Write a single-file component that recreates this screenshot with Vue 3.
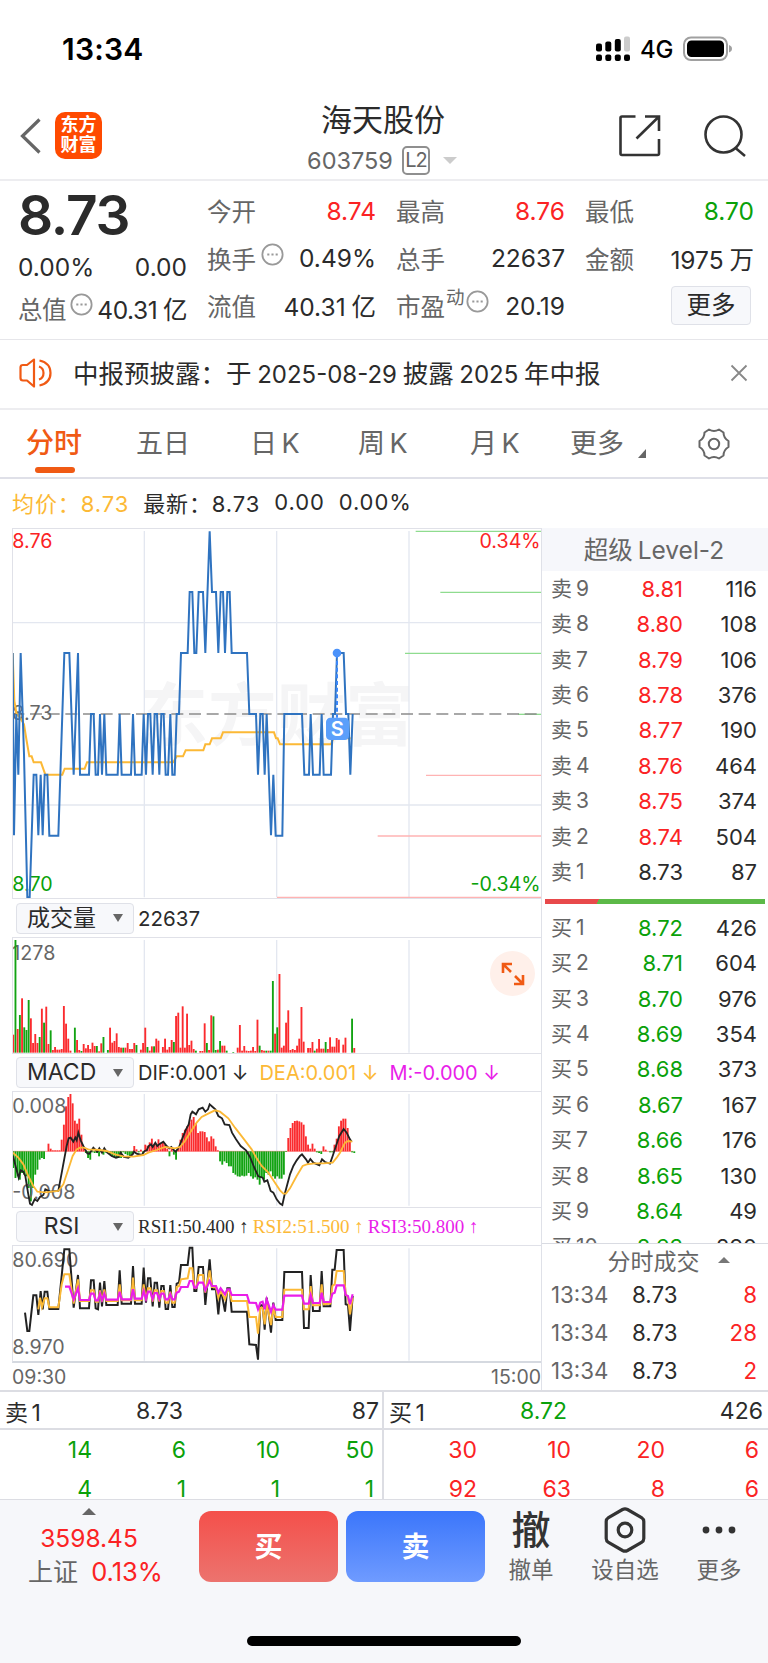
<script setup>
const facts = [
  [
    { label: '今开', value: '8.74', tone: 'up' },
    { label: '换手', value: '0.49%', more: true },
    { label: '流值', value: '40.31 亿' }
  ],
  [
    { label: '最高', value: '8.76', tone: 'up' },
    { label: '总手', value: '22637' },
    { label: '市盈', sup: '动', value: '20.19', more: true }
  ],
  [
    { label: '最低', value: '8.70', tone: 'down' },
    { label: '金额', value: '1975 万' }
  ]
]

const tabs = ['分时', '五日', '日 K', '周 K', '月 K', '更多']

const asks = [
  ['卖 9', '8.81', 116],
  ['卖 8', '8.80', 108],
  ['卖 7', '8.79', 106],
  ['卖 6', '8.78', 376],
  ['卖 5', '8.77', 190],
  ['卖 4', '8.76', 464],
  ['卖 3', '8.75', 374],
  ['卖 2', '8.74', 504],
  ['卖 1', '8.73', 87]
]

const bids = [
  ['买 1', '8.72', 426],
  ['买 2', '8.71', 604],
  ['买 3', '8.70', 976],
  ['买 4', '8.69', 354],
  ['买 5', '8.68', 373],
  ['买 6', '8.67', 167],
  ['买 7', '8.66', 176],
  ['买 8', '8.65', 130],
  ['买 9', '8.64', 49],
  ['买 10', '8.63', 290]
]

const trades = [
  ['13:34', '8.73', 8],
  ['13:34', '8.73', 28],
  ['13:34', '8.73', 2]
]

const queues = [
  { side: '卖 1', price: '8.73', total: 87, tone: 'down', priceTone: '', cells: [14, 6, 10, 50, 4, 1, 1, 1] },
  { side: '买 1', price: '8.72', total: 426, tone: 'up', priceTone: 'down', cells: [30, 10, 20, 6, 92, 63, 8, 6] }
]

// charts are drawn on a grid three times finer than the layout
const priceLine = '38,396 42,943 49,579 55,761 62,396 72,700 82,1129 89,1129 101,761 109,761 115,943 122,761 128,943 134,761 142,761 148,944 175,944 193,396 208,396 221,761 234,396 240,761 267,761 273,579 281,579 287,761 294,761 300,579 306,761 313,579 319,761 353,761 359,579 365,761 393,761 399,579 405,761 425,761 431,579 438,761 444,579 451,579 458,761 464,579 471,579 478,761 484,579 491,579 497,761 504,761 511,579 517,761 524,761 530,579 537,579 543,396 563,396 569,213 577,213 583,396 589,396 596,213 609,213 616,396 629,31 636,213 648,213 655,396 662,213 669,213 675,396 682,213 689,213 695,396 741,396 748,579 768,579 774,761 781,579 788,579 794,761 800,579 813,943 820,761 827,944 847,944 853,579 906,579 913,761 927,761 932,579 939,761 959,761 965,579 971,761 993,761 999,579 1005,579 1011,396 1031,396 1038,579 1045,579 1051,761 1058,579'
const averageLine = '38,396 43,540 50,580 60,590 72,610 80,660 88,706 95,706 101,724 123,724 136,761 187,761 194,743 254,743 261,724 520,724 530,706 549,706 557,688 610,688 616,670 629,670 636,652 662,652 669,634 822,634 828,652 833,652 840,670 993,670 1000,652 1052,652'

const depthLines = [
  [1247, 31, '#8fdc8f'],
  [1321, 214, '#8fdc8f'],
  [1215, 397, '#8fdc8f'],
  [1554, 580, '#8fdc8f'],
  [1278, 763, '#ffb3b3'],
  [1133, 945, '#ffb3b3'],
  [831, 1129, '#ffb3b3']
]

// negative means a falling minute
const volumes = [
  54, -338, 71, -113, 163, -76, -68, -158, 103, 29, 56, 29, -47, 132, -90, 138, 26, -67, 8, 17,
  9, 9, 11, 140, 87, 42, 6, 0, -75, 38, 8, -5, 26, 13, 23, 11, 30, 20, -20, 4,
  28, -47, 0, -8, 75, 30, 35, 58, 17, 15, -15, 15, 29, 11, 11, 29, -23, 0, 9, 29,
  75, -17, 6, 19, -19, 42, 36, 0, 17, 42, 9, 17, 38, -32, 110, 120, 15, 139, 15, 117,
  23, 36, 11, -6, 0, 5, 5, 88, -29, 8, 112, -109, -8, 9, -35, 21, 21, -6, 0, 0,
  -2, 0, 15, 83, 6, 20, 6, 5, 6, 17, 5, 99, -21, 8, 6, -6, 6, -6, -215, 57,
  -76, 236, 15, 21, 90, 127, 8, 11, 8, 21, 42, 137, 33, 0, 14, 14, 32, -6, 12, 41,
  12, 12, -32, 11, 46, 18, 18, 44, 39, 0, 24, 45, 0, 0, -102, 14
]

const macdBars = [
  -50, -80, -75, -85, -65, -70, -75, -110, -150, -110, -70, -55, -25, -20, -23, 0, 23, 8, 3, 3,
  3, 3, 35, 80, 135, 163, 172, 144, 92, 83, 98, 50, 13, -5, -20, -25, -3, -5, -5, -15,
  -3, -10, -4, -3, -10, -15, -18, -20, -20, -20, -3, -8, -12, -14, -10, 16, 6, -3, 5, -6,
  20, 17, 27, 38, 20, 20, 36, 25, 28, 20, 8, -15, 8, -10, -25, 8, 35, 55, 65, 75,
  85, 95, 103, 85, 55, 60, 60, 58, 42, 30, 45, 38, 15, 3, -30, -40, -30, -35, -45, -45,
  -65, -70, -75, -76, -73, -75, -73, -65, -75, -82, -78, -85, -100, -80, -85, -65, -70, -60, -75, -82,
  -75, -82, -82, -70, -2, 40, 70, 85, 91, 92, 90, 87, 80, 45, 20, 8, 23, 8, -3, -5,
  -8, 15, 5, 0, -3, -3, 20, 38, 75, 92, 98, 98, 70, 35, -3, -5
]

const difLine = '39,765 48,800 56,830 62,808 70,812 76,825 84,875 90,908 96,912 104,895 112,900 120,888 130,882 136,865 150,872 175,870 188,800 200,735 206,712 212,710 220,722 226,710 230,718 235,695 242,718 250,735 262,757 268,758 280,740 292,752 298,742 306,755 313,742 322,755 335,765 348,770 356,768 362,755 372,768 385,770 398,760 402,752 410,758 425,762 434,750 440,748 446,735 453,730 458,738 466,725 472,735 480,728 490,722 500,735 508,742 514,738 522,748 527,752 537,738 548,710 558,685 566,670 572,640 577,632 588,640 596,625 608,620 616,632 624,625 629,610 638,618 646,625 655,645 666,652 674,670 688,672 696,695 708,715 722,735 738,748 750,768 762,798 775,826 788,830 793,842 802,838 812,870 820,875 830,895 840,908 847,912 854,880 862,850 870,820 880,795 890,778 900,765 906,760 918,775 924,785 931,774 940,785 958,793 966,775 975,783 990,788 998,765 1008,735 1018,705 1031,684 1040,695 1050,715 1055,722'
const deaLine = '39,755 55,770 70,790 85,825 100,855 112,872 135,874 175,870 190,850 205,805 218,765 230,745 240,740 252,740 265,745 300,747 320,750 345,760 370,766 400,767 430,762 445,755 470,747 495,738 525,742 540,738 555,720 570,695 590,665 605,648 620,640 645,628 660,632 685,652 705,680 730,712 755,745 770,772 785,795 805,815 820,838 840,868 850,878 858,878 870,862 890,825 908,795 920,790 945,787 970,787 998,785 1010,770 1020,755 1035,725 1045,720 1057,722'

const rsi1 = '75,485 82,540 88,540 100,433 109,433 115,492 122,420 128,475 134,422 142,422 148,474 175,474 193,295 208,295 221,470 234,372 240,472 267,472 273,388 281,388 287,472 294,475 300,395 306,466 313,390 319,462 353,462 359,358 365,458 393,458 399,345 405,458 425,458 431,350 438,455 444,382 451,382 458,466 464,395 471,395 478,470 484,405 491,405 497,474 504,474 511,402 517,468 524,468 530,398 537,395 543,342 563,342 569,290 577,290 583,420 589,420 596,348 609,348 616,462 629,325 636,415 648,415 655,490 662,412 675,482 682,412 689,412 695,482 741,482 748,580 768,582 774,626 781,463 788,463 794,536 800,440 813,545 820,455 827,507 847,507 853,363 906,363 912,531 926,531 932,372 939,480 959,480 965,360 971,466 991,466 997,356 1004,356 1010,297 1031,297 1037,460 1044,462 1050,540 1058,435'
const rsi2 = '115,475 120,440 126,468 134,442 142,442 148,469 175,469 185,400 193,370 208,370 221,458 234,385 240,450 267,450 273,418 281,418 287,452 294,452 300,418 306,452 313,415 319,450 353,450 359,400 365,448 393,448 399,380 405,448 425,448 431,400 438,448 444,412 451,412 458,452 464,418 471,418 478,452 484,420 491,420 497,455 504,455 511,422 517,455 524,455 530,408 537,405 543,385 563,382 569,352 577,352 583,410 589,410 596,372 609,372 616,425 629,358 636,408 648,408 655,440 662,418 675,445 682,420 689,420 695,450 741,450 748,498 768,498 774,548 781,470 788,470 794,520 800,458 813,522 820,470 827,498 847,498 853,416 906,416 912,475 926,475 932,405 939,463 959,463 965,400 971,460 991,458 997,405 1004,400 1010,360 1031,360 1037,430 1044,440 1050,490 1058,440'
const rsi3 = '195,407 208,407 221,445 234,412 240,447 267,447 273,428 281,428 287,448 294,448 300,428 306,447 313,428 319,446 353,446 359,422 365,445 393,445 399,415 405,443 425,443 431,420 438,444 444,422 451,422 458,444 464,426 471,426 478,444 484,428 491,428 497,445 504,445 511,430 517,445 524,445 530,425 537,422 543,408 563,408 569,390 577,390 583,410 589,410 596,395 609,395 616,418 629,390 636,405 648,405 655,425 662,412 675,430 682,415 689,415 695,432 741,432 748,455 768,456 774,475 781,455 788,452 794,475 800,445 813,482 820,462 827,476 847,476 853,434 906,434 912,458 926,458 932,432 939,456 959,456 965,425 971,453 991,453 997,428 1004,425 1010,403 1031,403 1037,432 1044,435 1050,460 1058,430'

// volume columns all stand on the base line, macd columns hang from it when negative
const toBars = (list, base, standing) =>
  list
    .map((v, i) => ({
      x: 37 + i * 6.6,
      y: v > 0 || standing ? base - Math.abs(v) : base,
      h: Math.abs(v),
      fill: v > 0 ? '#fb2b2e' : '#12a312'
    }))
    .filter((bar) => bar.h)

const volumeBars = toBars(volumes, 455, true)
const histogram = toBars(macdBars, 751, false)
</script>

<template>
  <div class="screen">
    <div class="status">
      <span class="clock">13:34</span>
      <div class="status-right">
        <svg width="35" height="26" viewBox="0 0 35 26">
          <g fill="#000">
            <rect x="0" y="7.5" width="6" height="8" rx="2" />
            <rect x="9.3" y="5.5" width="6" height="10" rx="2" />
            <rect x="18.8" y="3" width="6" height="12.5" rx="2" />
            <rect x="0" y="18.5" width="6" height="6.5" rx="2" />
            <rect x="9.3" y="18.5" width="6" height="6.5" rx="2" />
            <rect x="18.8" y="18.5" width="6" height="6.5" rx="2" />
            <rect x="28" y="18.5" width="6" height="6.5" rx="2" />
          </g>
          <rect x="28" y="0.5" width="6" height="15" rx="2" fill="#ccc" />
        </svg>
        <span class="network">4G</span>
        <svg width="50" height="26" viewBox="0 0 50 26">
          <rect x="1" y="1.5" width="43" height="22.5" rx="7" fill="none" stroke="#a0a0a0" stroke-width="2" />
          <rect x="4" y="4.5" width="37" height="16.5" rx="4.5" />
          <path d="M46 9v7.5q3-1 3-3.7T46 9z" fill="#a0a0a0" />
        </svg>
      </div>
    </div>

    <header class="header">
      <div class="header-left">
        <svg width="22" height="36" viewBox="0 0 22 36" fill="none" stroke="#666" stroke-width="3.2">
          <path d="M19.5 1.5 2.5 18l17 16.5" />
        </svg>
        <div class="logo">东方<br />财富</div>
      </div>
      <div class="header-title">
        <h1>海天股份</h1>
        <div class="code">
          <span>603759</span>
          <span class="level">L2</span>
          <i class="caret"></i>
        </div>
      </div>
      <div class="header-right">
        <svg width="44" height="44" viewBox="0 0 44 44" fill="none" stroke="#333" stroke-width="2.6">
          <path d="M17.5 2.5H4Q2.5 2.5 2.5 4V39.5Q2.5 41 4 41H39.5Q41 41 41 39.5V25" />
          <path d="M27 2.5H41V17M41 2.5 18.5 24.5" />
        </svg>
        <svg width="44" height="44" viewBox="0 0 44 44" fill="none" stroke="#333" stroke-width="2.6">
          <circle cx="20.5" cy="20.5" r="18" />
          <path d="M32.5 34 42 42" />
        </svg>
      </div>
    </header>

    <section class="quote">
      <div class="quote-col first">
        <div class="price">8.73</div>
        <div class="fact change"><span>0.00%</span><span>0.00</span></div>
        <div class="fact cap">
          <span class="label">总值<svg class="dots" viewBox="0 0 22 22"><circle cx="11" cy="11" r="9.7" /><path d="M6 11h2M10 11h2M14 11h2" /></svg></span>
          <span>40.31 亿</span>
        </div>
      </div>
      <div v-for="(col, c) in facts" :key="c" class="quote-col">
        <div v-for="fact in col" :key="fact.label" class="fact">
          <span class="label">{{ fact.label }}<sup v-if="fact.sup">{{ fact.sup }}</sup><svg v-if="fact.more" class="dots" viewBox="0 0 22 22"><circle cx="11" cy="11" r="9.7" /><path d="M6 11h2M10 11h2M14 11h2" /></svg></span>
          <span :class="fact.tone">{{ fact.value }}</span>
        </div>
        <div v-if="c === 2" class="fact end"><button class="more">更多</button></div>
      </div>
    </section>

    <section class="notice">
      <svg width="34" height="30" viewBox="0 0 34 30" fill="none" stroke="#f05a14" stroke-width="2.2">
        <path d="M15 1.5 8 7H4Q1.5 7 1.5 9.500V20Q1.5 22.5 4 22.5H8L15 28.5z" stroke-linejoin="round" />
        <path d="M20 8.5Q24.5 10 24.5 15T20 21.5M20.5 2.5Q31.5 5 31.5 15T20.5 27.5" />
      </svg>
      <p>中报预披露：于 <b>2025-08-29</b> 披露 <b>2025</b> 年中报</p>
      <svg width="18" height="18" viewBox="0 0 18 18" stroke="#888" stroke-width="1.8">
        <path d="M1.5 1.5 16.5 16.5M16.5 1.5 1.5 16.5" />
      </svg>
    </section>

    <nav class="tabs">
      <span v-for="(tab, i) in tabs" :key="tab" :class="['tab', 'tab-' + i, { active: i === 0 }]">{{ tab }}</span>
      <i class="corner"></i>
      <svg class="gear" width="34" height="34" viewBox="0 0 34 34" fill="none" stroke="#666" stroke-width="2">
        <path d="M12 2.5Q17 5.5 22 2.5L26.5 5.5Q26.5 11 31.5 14V20Q26.5 23 26.5 28.5L22 31.5Q17 28.5 12 31.5L7.5 28.5Q7.500 23 2.5 20V14Q7.500 11 7.5 5.5z" stroke-linejoin="round" />
        <circle cx="17" cy="17" r="5.2" />
      </svg>
    </nav>

    <div class="summary">
      <span class="avg">均价：8.73</span>
      <span>最新：8.73</span>
      <span>0.00</span>
      <span>0.00%</span>
    </div>

    <main class="board">
      <div class="charts">
        <svg class="pane" width="528" height="369" viewBox="39 24 1584 1107">
          <text class="watermark" x="418" y="658">东方财富</text>
          <g stroke="#e3e7f0" stroke-width="4">
            <path d="M433 30V1129M830 30V1129M1227 30V1129M39 305H1623M39 852H1623" />
          </g>
          <path v-for="line in depthLines" :key="line[1]" :d="`M${line[0]} ${line[1]}H1623`" :stroke="line[2]" stroke-width="4" />
          <path d="M37 579H1612" stroke="#8c8c8c" stroke-width="5" stroke-dasharray="36 17" />
          <g class="axis">
            <text class="up" x="37" y="81">8.76</text>
            <text x="37" y="597">8.73</text>
            <text class="down" x="37" y="1111">8.70</text>
            <text class="up" x="1622" y="81" text-anchor="end">0.34%</text>
            <text class="down" x="1622" y="1111" text-anchor="end">-0.34%</text>
          </g>
          <polyline :points="averageLine" fill="none" stroke="#fcb936" stroke-width="6" />
          <polyline :points="priceLine" fill="none" stroke="#2f73c0" stroke-width="6" />
          <path d="M1011 400V590" stroke="#3b86f8" stroke-width="6" stroke-dasharray="12 8" />
          <circle cx="1011" cy="396" r="13" fill="#4b92fa" />
          <rect x="978" y="590" width="69" height="67" rx="13" fill="#5b9ffb" />
          <text class="mark" x="1012" y="645" text-anchor="middle">S</text>
        </svg>

        <div class="indicator tall">
          <button class="select"><span>成交量</span><i></i></button>
          <span>22637</span>
        </div>
        <div class="volume">
          <svg class="pane" width="528" height="115" viewBox="39 111 1584 345">
            <path d="M433 117V455M830 117V455M1227 117V455" stroke="#e3e7f0" stroke-width="4" />
            <g class="axis"><text x="37" y="176">1278</text></g>
            <rect v-for="bar in volumeBars" :key="bar.x" :x="bar.x" :y="bar.y" width="5.6" :height="bar.h" :fill="bar.fill" />
          </svg>
          <button class="expand">
            <svg width="24" height="24" viewBox="0 0 24 24" fill="none" stroke="#f05a14" stroke-width="2.6">
              <path d="M2 11V2H11M2 2 10 10M22 13V22H13M22 22 14 14" />
            </svg>
          </button>
        </div>

        <div class="indicator">
          <button class="select"><span>MACD</span><i></i></button>
          <span>DIF:0.001 ↓</span>
          <span class="gold">DEA:0.001 ↓</span>
          <span class="pink">M:-0.000 ↓</span>
        </div>
        <svg class="pane" width="528" height="115" viewBox="39 573 1584 345">
          <path d="M433 579V914M830 579V914M1227 579V914" stroke="#e3e7f0" stroke-width="4" />
          <path d="M37 751H1060" stroke="#ff9c9c" stroke-width="3" />
          <rect v-for="bar in histogram" :key="bar.x" :x="bar.x" :y="bar.y" width="5.6" :height="bar.h" :fill="bar.fill" />
          <g class="axis">
            <text x="37" y="636">0.008</text>
            <text x="37" y="895">-0.008</text>
          </g>
          <polyline :points="difLine" fill="none" stroke="#222" stroke-width="5.5" />
          <polyline :points="deaLine" fill="none" stroke="#fcb936" stroke-width="5.5" />
        </svg>

        <div class="indicator serif">
          <button class="select"><span>RSI</span><i></i></button>
          <span>RSI1:50.400 ↑</span>
          <span class="gold">RSI2:51.500 ↑</span>
          <span class="pink">RSI3:50.800 ↑</span>
        </div>
        <svg class="pane last" width="528" height="115" viewBox="39 285 1584 345">
          <path d="M433 292V629M830 292V629M1227 292V629" stroke="#e3e7f0" stroke-width="4" />
          <g class="axis">
            <text x="37" y="349">80.690</text>
            <text x="37" y="609">8.970</text>
          </g>
          <polyline :points="rsi1" fill="none" stroke="#222" stroke-width="6" />
          <polyline :points="rsi2" fill="none" stroke="#fcb936" stroke-width="6" />
          <polyline :points="rsi3" fill="none" stroke="#e91ee9" stroke-width="6.5" />
        </svg>
        <div class="times"><span>09:30</span><span>15:00</span></div>
      </div>

      <aside class="book">
        <div class="book-title">超级 Level-2</div>
        <div class="orders">
          <div v-for="row in asks" :key="row[0]" class="order">
            <span class="label">{{ row[0] }}</span>
            <span :class="['p', { up: row[1] !== '8.73' }]">{{ row[1] }}</span>
            <span class="q">{{ row[2] }}</span>
          </div>
          <div class="ratio"></div>
          <div v-for="row in bids" :key="row[0]" class="order">
            <span class="label">{{ row[0] }}</span>
            <span class="p down">{{ row[1] }}</span>
            <span class="q">{{ row[2] }}</span>
          </div>
        </div>
        <div class="trades-title">分时成交<i></i></div>
        <div v-for="(row, i) in trades" :key="i" class="trade">
          <span class="label">{{ row[0] }}</span>
          <span>{{ row[1] }}</span>
          <span class="q up">{{ row[2] }}</span>
        </div>
      </aside>
    </main>

    <section class="queues">
      <div v-for="queue in queues" :key="queue.side" class="queue">
        <div class="queue-head">
          <span>{{ queue.side }}</span>
          <span :class="queue.priceTone">{{ queue.price }}</span>
          <span class="total">{{ queue.total }}</span>
        </div>
        <div :class="['cells', queue.tone]">
          <span v-for="(cell, i) in queue.cells" :key="i">{{ cell }}</span>
        </div>
      </div>
    </section>

    <footer class="footer">
      <div class="actions">
        <div class="index">
          <i></i>
          <span class="up">3598.45</span>
          <div><span>上证</span><span class="up percent">0.13%</span></div>
        </div>
        <button class="trade-btn buy">买</button>
        <button class="trade-btn sell">卖</button>
        <div class="action cancel"><strong>撤</strong><span>撤单</span></div>
        <div class="action fav">
          <svg width="42" height="46" viewBox="0 0 42 46" fill="none" stroke="#333" stroke-width="3.2">
            <path d="M18.5 2.5Q21 1.2 23.5 2.5L37.5 10.5Q39.8 12 39.8 14.5V31.5Q39.8 34 37.5 35.5L23.5 43.5Q21 44.8 18.5 43.5L4.5 35.5Q2.2 34 2.2 31.5V14.5Q2.2 12 4.5 10.5z" />
            <circle cx="21" cy="23" r="6.8" />
          </svg>
          <span>设自选</span>
        </div>
        <div class="action rest">
          <svg width="42" height="46" viewBox="0 0 42 46" fill="#333">
            <circle cx="8" cy="23" r="3.4" /><circle cx="21" cy="23" r="3.4" /><circle cx="34" cy="23" r="3.4" />
          </svg>
          <span>更多</span>
        </div>
      </div>
      <div class="home"></div>
    </footer>
  </div>
</template>

<style>
body {
  background: #fff;
}
</style>

<style scoped>
.screen {
  width: 768px;
  height: 1663px;
  overflow: hidden;
  display: flex;
  flex-direction: column;
  background: #fff;
  color: #2b2b2b;
  font-family: Inter, 'Noto Sans CJK SC', sans-serif;
  font-size: 22px;
  white-space: nowrap;
}

.screen * {
  box-sizing: border-box;
}

svg {
  display: block;
  flex: none;
}

button {
  border: 0;
  padding: 0;
  font: inherit;
  color: inherit;
}

.up {
  color: #fb2324;
  fill: #fb2324;
}

.down {
  color: #0aa10a;
  fill: #0aa10a;
}

.label {
  color: #666;
}

.gold {
  color: #fcb936;
}

.pink {
  color: #e91ee9;
}

/* status bar */
.status {
  height: 98px;
  padding: 0 35px 0 62px;
  display: flex;
  align-items: center;
  justify-content: space-between;
}

.clock {
  color: #000;
  font-size: 30px;
  font-weight: 600;
  letter-spacing: 0.2px;
}

.status-right {
  display: flex;
  align-items: center;
  color: #000;
}

.network {
  width: 34px;
  margin: 1px 9px 0;
  font-size: 24px;
  font-weight: 500;
  letter-spacing: -0.3px;
}

/* header */
.header {
  height: 83px;
  padding: 0 20px;
  border-bottom: 2px solid #ededf0;
  display: grid;
  grid-template-columns: 1fr 180px 1fr;
}

.header-left {
  display: flex;
  gap: 13px;
  padding-top: 14px;
  align-items: flex-start;
}

.header-left svg {
  margin-top: 6px;
}

.logo {
  width: 47px;
  height: 47px;
  padding-top: 3px;
  border-radius: 10px;
  background: #ff4a00;
  color: #fff;
  font-size: 18px;
  font-weight: 700;
  line-height: 20px;
  text-align: center;
}

.header-title {
  display: flex;
  flex-direction: column;
  align-items: center;
}

h1 {
  margin: 0 0 0 -2px;
  height: 45px;
  font-size: 31px;
  line-height: 44px;
  font-weight: 400;
}

.code {
  display: flex;
  align-items: center;
  height: 34px;
  margin-left: -4px;
  color: #666;
  font-size: 23.5px;
}

.level {
  width: 28px;
  height: 29px;
  margin-left: 9px;
  border: 2px solid #8f8f8f;
  border-radius: 5px;
  font-size: 20px;
  line-height: 25px;
  letter-spacing: -1px;
  text-align: center;
}

.caret {
  margin-left: 13px;
  border: 7px solid transparent;
  border-top-color: #ccc;
  border-bottom: 0;
}

.header-right {
  display: flex;
  justify-content: flex-end;
  gap: 41px;
  padding: 16px 1px 0 0;
}

/* quote */
.quote {
  height: 159px;
  padding: 6px 14px 0 18px;
  border-bottom: 1px solid #e6e6ea;
  display: grid;
  grid-template-columns: repeat(4, 169px);
  gap: 20px;
}

.fact {
  height: 47.500px;
  display: flex;
  align-items: center;
  justify-content: space-between;
  font-size: 24.5px;
  word-spacing: -1px;
}

.fact .label {
  display: flex;
  font-size: 24.5px;
}

.fact sup {
  align-self: flex-start;
  margin: -3px 0 0 1px;
  font-size: 18.5px;
  line-height: 24px;
}

.dots {
  width: 23px;
  height: 23px;
  margin: 2px 0 0 5px;
  fill: none;
  stroke: #999;
  stroke-width: 1.7;
}

sup + .dots {
  margin-left: 1px;
}

.price {
  height: 56px;
  font-size: 55px;
  font-weight: 600;
  line-height: 56px;
  letter-spacing: -1.2px;
}

.change {
  height: 44px;
  padding-top: 3px;
}

.cap {
  height: 42px;
  letter-spacing: -0.4px;
}

.cap .dots {
  margin-left: 4px;
}

.end {
  justify-content: flex-end;
}

.more {
  width: 80px;
  height: 39px;
  margin-right: 3px;
  border: 1px solid #dfe1e8;
  border-radius: 4px;
  background: #f7f8fb;
  font-size: 24.5px;
  line-height: 35px;
}

/* notice */
.notice {
  height: 70px;
  padding: 0 20px 2px 19px;
  border-bottom: 2px solid #ededf0;
  display: flex;
  align-items: center;
}

.notice p {
  flex: 1;
  margin: -3px 0 0 20px;
  font-size: 25.5px;
  word-spacing: -1.5px;
}

.notice b {
  font-weight: 400;
  font-size: 24px;
}

/* tabs */
.tabs {
  height: 69px;
  padding: 0 0 0 26px;
  border-bottom: 2px solid #dfe0e8;
  display: flex;
  align-items: center;
  color: #666;
  font-size: 27px;
  word-spacing: -3px;
}

.tab {
  position: relative;
  line-height: 65px;
}

.tab-0 { width: 110px; }
.tab-1 { width: 114px; }
.tab-2 { width: 108px; }
.tab-3 { width: 112px; }
.tab-4 { width: 100px; }
.tab-5 { width: 68px; }

.active {
  color: #f05a14;
  font-size: 28px;
  font-weight: 500;
}

.active::after {
  content: '';
  position: absolute;
  left: 9px;
  bottom: 3px;
  width: 40px;
  height: 6px;
  border-radius: 3px;
  background: #f05a14;
}

.corner {
  margin-top: 20px;
  border-left: 8px solid transparent;
  border-bottom: 9px solid #666;
}

.gear {
  margin-left: 51px;
}

.summary {
  height: 46px;
  margin-bottom: 3px;
  padding-left: 12px;
  display: flex;
  align-items: center;
  gap: 14px;
  letter-spacing: 0.9px;
}

.avg {
  color: #fcb936;
}

/* board */
.board {
  height: 862px;
  display: grid;
  grid-template-columns: 542px 1fr;
}

.charts {
  padding-left: 12px;
  border-right: 1px solid #dfe1e8;
}

.charts .pane {
  box-sizing: content-box;
  border: solid #e0e1e8;
  border-width: 1px 0 1px 1px;
}

.charts .last {
  border-bottom: 2px solid #d5d9e0;
}

.axis {
  font-size: 59px;
  fill: #666;
}

.watermark {
  font-size: 206px;
  font-weight: 700;
  fill: #f5f5f6;
}

.mark {
  font-size: 60px;
  font-weight: 600;
  fill: #fff;
}

.indicator {
  height: 37px;
  padding-left: 4px;
  display: flex;
  align-items: center;
  gap: 11px;
  font-size: 20px;
}

.tall {
  height: 38px;
  font-size: 20.5px;
}

.indicator .select {
  width: 118px;
  height: 31px;
  margin-right: -7px;
  padding: 0 10px;
  border: 1px solid #dfe1e8;
  border-radius: 4px;
  background: #f7f8fb;
  display: flex;
  align-items: center;
  justify-content: space-between;
  font-family: Inter, 'Noto Sans CJK SC', sans-serif;
  font-size: 23px;
  line-height: 29px;
}

.select span {
  flex: 1;
  text-align: center;
  margin-right: 17px;
}

.select i {
  border: 5px solid transparent;
  border-top: 8px solid #666;
  border-bottom: 0;
}

.serif {
  font-family: 'Liberation Serif', serif;
  font-size: 19px;
  gap: 4px;
}

.serif .select {
  margin-right: 0;
}

.volume {
  position: relative;
}

.expand {
  position: absolute;
  right: 6px;
  top: 14px;
  width: 45px;
  height: 45px;
  border-radius: 50%;
  background: #fff0ea;
  display: grid;
  place-items: center;
}

.times {
  height: 27px;
  display: flex;
  align-items: center;
  justify-content: space-between;
  color: #666;
  font-size: 19.500px;
}

/* order book */
.book {
  display: flex;
  flex-direction: column;
}

.book-title {
  height: 43px;
  padding-right: 2px;
  background: #f6f7fb;
  color: #666;
  font-size: 24.5px;
  line-height: 44px;
  text-align: center;
  word-spacing: -2px;
}

.orders {
  height: 673px;
  border-bottom: 1px solid #d9dbe2;
  overflow: hidden;
}

.order {
  height: 35.450px;
  padding: 0 11px 0 9px;
  display: grid;
  grid-template-columns: 61px 71px 1fr;
  align-items: center;
  font-size: 22px;
}

.order .label {
  font-size: 21px;
  line-height: 30px;
  word-spacing: -2px;
}

.p,
.q {
  text-align: right;
}

.ratio {
  height: 5px;
  margin: 9px 3px 6px;
  background: linear-gradient(120deg, #e8494b 47px, #5cb948 47px);
}

.trades-title {
  height: 31px;
  padding-left: 27px;
  display: flex;
  align-items: center;
  justify-content: center;
  gap: 18px;
  color: #666;
  font-size: 23px;
}

.trades-title i {
  border: 6px solid transparent;
  border-top: 0;
  border-bottom-color: #777;
}

.trade {
  height: 38.200px;
  padding: 0 11px 0 9px;
  display: grid;
  grid-template-columns: 81px 60px 1fr;
  align-items: center;
  font-size: 22.3px;
}

/* queues */
.queues {
  height: 109px;
  border-top: 2px solid #dcdde3;
  display: grid;
  grid-template-columns: 384px 384px;
  overflow: hidden;
  font-size: 23px;
}

.queue:first-child {
  border-right: 2px solid #dcdde3;
}

.queue-head {
  height: 38px;
  padding: 1px 5px 0;
  border-bottom: 2px solid #dcdde3;
  display: grid;
  grid-template-columns: 131px 60px 1fr;
  align-items: center;
  word-spacing: -3px;
}

.total {
  text-align: right;
}

.queue:first-child .queue-head {
  padding-right: 3px;
}

.cells {
  padding: 0 9px 0 0;
  display: grid;
  grid-template-columns: 93px 94px 94px 94px;
  grid-auto-rows: 39px;
  align-items: center;
  text-align: right;
}

.queue:first-child .cells {
  margin-left: -1px;
}

/* footer */
.footer {
  flex: 1;
  border-top: 1px solid #dcdde3;
  background: #f6f7fa;
}

.actions {
  height: 136px;
  padding: 11px 0 0 19px;
  display: flex;
  align-items: flex-start;
}

.index {
  width: 153px;
  margin-right: 27px;
  display: flex;
  flex-direction: column;
  align-items: center;
  color: #666;
  font-size: 25px;
  line-height: 34px;
}

.index i {
  margin: -3px 0 6px -13px;
  border: 7px solid transparent;
  border-top: 0;
  border-bottom-color: #666;
}

.index > span {
  margin-left: -13px;
  font-size: 24.5px;
}

.index div {
  display: flex;
  gap: 13px;
}

.index .percent {
  font-size: 25.5px;
}

.trade-btn {
  width: 139px;
  height: 71px;
  margin-right: 8px;
  padding-bottom: 3px;
  border-radius: 12px;
  color: #fff;
  font-size: 28px;
  font-weight: 600;
}

.buy {
  background: linear-gradient(#f4504b, #ec736e);
}

.sell {
  background: linear-gradient(#3b76fb, #6f9bff);
}

.action {
  display: flex;
  flex-direction: column;
  align-items: center;
  color: #666;
  font-size: 22.5px;
  line-height: 32px;
}

.action svg {
  margin: -4px 0 1px;
}

.action strong {
  height: 43px;
  color: #333;
  font-size: 39px;
  font-weight: 500;
  line-height: 37px;
}

.cancel { width: 62px; margin-left: 7px; }
.fav { width: 90px; margin-left: 18px; }
.rest { width: 60px; margin-left: 19px; }

.home {
  width: 274px;
  height: 10px;
  margin: 0 auto;
  border-radius: 5px;
  background: #000;
}
</style>
